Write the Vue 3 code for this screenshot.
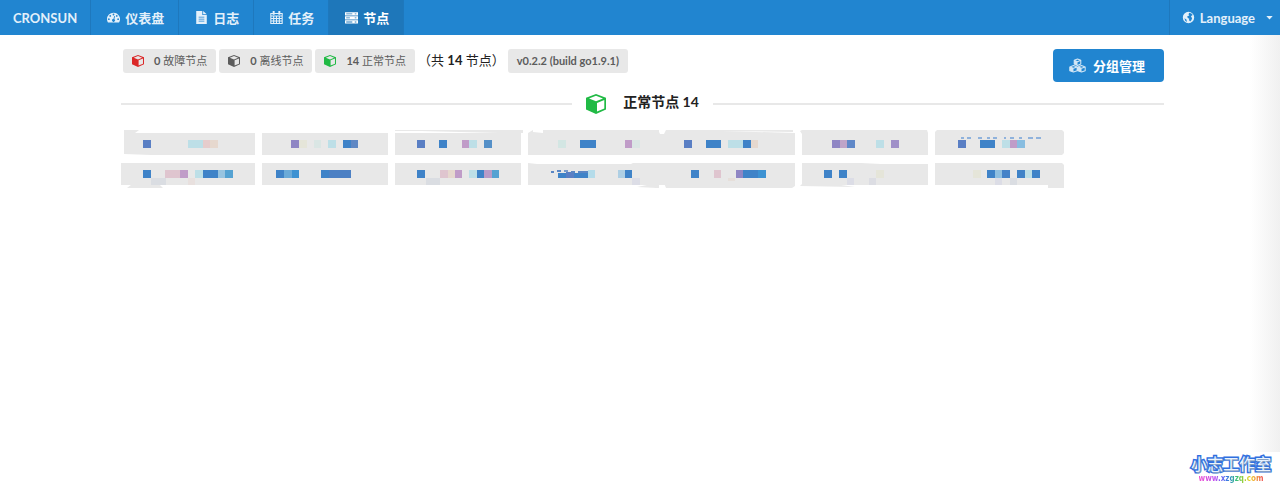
<script setup>
const menu = [
  { text: '仪表盘', icon: 'gauge' },
  { text: '日志', icon: 'file' },
  { text: '任务', icon: 'calendar' },
  { text: '节点', icon: 'server', active: true },
]

const labels = [
  { count: 0, text: '故障节点', tone: 'red' },
  { count: 0, text: '离线节点', tone: 'grey' },
  { count: 14, text: '正常节点', tone: 'green' },
]

const B = '#3f83c8', S = '#5a7fc4', V = '#8f86c4', C = '#bddfe7', P = '#c09cc8', R = '#dfc5cf', O = '#e6d8ce', Y = '#e5e5d9', G = '#dae6e4', F = '#dadde2'

// Each tile: outline path, then mosaic cells as [x, width, colour, y, height].
const nodes = [
  { d: 'M3 2H18L14 5H134V27H30L3 26Z', cells: [[22, 8, S], [67, 15, C], [82, 7, '#e6cccc'], [89, 8, O]] },
  { d: 'M141 5H267V27H141Z', cells: [[170, 8, V], [178, 8, Y], [193, 7, G], [207, 8, C], [222, 8, B], [230, 7, '#6088c4']] },
  { d: 'M274 2H402V5H400V27H274V5H378L300 3H274Z', cells: [[274, 126, '#e8e8e8', 5, 7], [296, 8, S], [318, 8, B], [341, 7, P], [348, 8, C], [363, 8, '#5590c8']] },
  { d: 'M407 5L412 2V4L422 5V2H537L539 6H544V27H407Z', cells: [[437, 8, '#d3e6e3'], [459, 16, B], [504, 7, P], [511, 8, G]] },
  { d: 'M534 2H538V6H543L545 2H672V4L600 3L674 5V27H534Z', cells: [[563, 8, S], [585, 15, B], [607, 15, C], [622, 8, B], [630, 7, O]] },
  { d: 'M681 2H806L807 5V27H681V6L679 3Z', cells: [[711, 8, V], [719, 7, '#bfa4c8'], [726, 8, '#6088c8'], [755, 8, C], [770, 8, '#a090c8']] },
  { d: 'M816 2H941L943 4V25L941 27H814V4Z', cells: [[837, 8, S], [859, 15, B], [881, 8, C], [889, 7, P], [896, 8, '#88bde0'],
    ...[[840, 3], [846, 4], [857, 4], [866, 3], [872, 4], [883, 2], [889, 4], [898, 3], [907, 5], [915, 5]].map(([x, w]) => [x, w, '#8fb2dc', 9, 2])] },
  { d: 'M0 5H134V27H39L42 30H6L10 27H0Z', cells: [[22, 8, B], [44, 15, R], [59, 8, P], [74, 8, C], [82, 15, B], [97, 7, '#98c4e0'], [104, 8, '#55a2d2'], [30, 15, F, 20, 7], [67, 7, '#e8e0de', 20, 7]] },
  { d: 'M141 5H267V27H141Z', cells: [[155, 8, B], [163, 8, '#6aaad8'], [171, 7, '#3d92d2'], [200, 8, B], [208, 22, '#4c80c4']] },
  { d: 'M274 5H400V27H274Z', cells: [[296, 8, B], [319, 8, R], [327, 7, O], [334, 7, P], [348, 8, C], [356, 7, B], [363, 8, '#b89bc8'], [371, 7, '#55a2d2'], [305, 14, F, 20, 7]] },
  { d: 'M407 5L416 6H510L512 5H544V27H538L536 30L516 29L526 27H407Z', cells: [[437, 30, B, 15, 5], [445, 8, S, 14, 6], [467, 7, '#b5dcea'], [497, 7, '#aecfe4'], [504, 7, B], [430, 3, '#5a86c4', 13, 2], [436, 4, '#5a86c4', 12, 2], [443, 4, '#7a9ccc', 12, 2], [450, 4, '#5a86c4', 13, 2], [457, 10, '#5a86c4', 13, 2], [511, 8, '#dcdde6', 20, 7]] },
  { d: 'M534 5H674V28L671 30H545L543 25H538V30H534Z', cells: [[570, 8, B], [593, 7, R], [615, 7, V], [622, 15, B], [637, 8, '#3d92d2'], [607, 7, '#e6dfda', 20, 3]] },
  { d: 'M681 5H740L760 6H807V27H720L734 29L679 28L681 26Z', cells: [[703, 8, B], [718, 8, B], [755, 8, Y], [726, 7, '#dcdde6', 20, 7], [748, 7, '#dcdde3', 20, 7]] },
  { d: 'M814 5H941L943 7V30H927V27H814Z', cells: [[852, 8, Y], [866, 8, B], [874, 7, '#8fbfe0'], [881, 8, '#4482c8'], [896, 8, B], [904, 7, C], [911, 8, B], [874, 7, '#dcdde6', 20, 7], [889, 7, F, 20, 7]] },
]
</script>

<template>
  <div class="page">
    <nav class="menu">
      <a class="item brand" href="#">CRONSUN</a>
      <a v-for="m in menu" :key="m.text" class="item" :class="{ active: m.active }" href="#">
        <svg class="icon" viewBox="0 0 16 16" aria-hidden="true">
          <template v-if="m.icon === 'gauge'">
            <path fill="currentColor" fill-rule="evenodd" d="M8 2a8 8 0 0 0-8 8c0 1.6.4 3 1.2 4.2h13.6A8 8 0 0 0 8 2ZM8 3.2a1.1 1.1 0 1 1 0 2.2 1.1 1.1 0 0 1 0-2.2ZM4 4.9a1.1 1.1 0 1 1 0 2.2 1.1 1.1 0 0 1 0-2.2Zm8 0a1.1 1.1 0 1 1 0 2.2 1.1 1.1 0 0 1 0-2.2ZM2.3 8.9a1.1 1.1 0 1 1 0 2.2 1.1 1.1 0 0 1 0-2.2Zm11.4 0a1.1 1.1 0 1 1 0 2.2 1.1 1.1 0 0 1 0-2.2ZM8.9 6.2l1 .3-.9 3.5a1.8 1.8 0 1 1-1.1-.3Z" />
          </template>
          <template v-else-if="m.icon === 'file'">
            <path fill="currentColor" fill-rule="evenodd" d="M1.500 0H9v5h5.500v11h-13ZM10 0l4.500 4H10ZM4.500 7v1h7V7Zm0 2.500v1h7v-1Zm0 2.500v1h7v-1Z" />
          </template>
          <template v-else-if="m.icon === 'calendar'">
            <path fill="none" stroke="currentColor" stroke-width="1.3" d="M1 3h14v12.400H1ZM1 6.200h14M1 9.200h14M1 12.200h14M4.500 6v9M8 6v9M11.500 6v9" />
            <path fill="none" stroke="currentColor" stroke-width="2.4" d="M4.500 0v4.500M11.500 0v4.500" />
          </template>
          <template v-else>
            <path fill="currentColor" fill-rule="evenodd" d="M0 1.500h16v4H0ZM1.500 3v1H9V3Zm10.500 0v1h2V3ZM0 6.500h16v4H0ZM1.500 8v1H6V8ZM12 8v1h2V8ZM0 11.500h16v4H0ZM1.500 13v1H9v-1Zm10.500 0v1h2v-1Z" />
          </template>
        </svg>
        <span>{{ m.text }}</span>
      </a>
      <button class="item language" type="button">
        <svg class="icon" viewBox="0 0 16 16" aria-hidden="true">
          <path fill="currentColor" fill-rule="evenodd" d="M8 1a7 7 0 1 1 0 14A7 7 0 0 1 8 1ZM9 2.300 11.500 3 13.300 5 12 5.500 11 7 12.500 8.500 11.500 11.500 10 13 8.500 11 9 9.500 7 8.500 6.500 6.500 9 5.500 8 4ZM3 9 5.500 10.500 6 13.500 4 12Z" />
        </svg>
        <span>Language</span>
        <svg class="caret" viewBox="0 0 8 5" aria-hidden="true"><path fill="currentColor" d="M0 0h8L4 4.500Z" /></svg>
      </button>
    </nav>

    <main class="content">
      <header class="summary">
        <div class="labels">
          <span v-for="l in labels" :key="l.text" class="label">
            <svg class="cube" :class="l.tone" viewBox="0 0 20 20" aria-hidden="true">
              <path fill="currentColor" fill-rule="evenodd" d="M10 0 20 3.800V15.500L10 20 0 15.500V3.800ZM10 1.800 3 4.500 10 7.300 17 4.500ZM18.300 6 11 8.900V17.600L18.300 14.400Z" />
            </svg>
            <span><b>{{ l.count }}</b> {{ l.text }}</span>
          </span>
          <span class="total">（共 <b>14</b> 节点）</span>
          <span class="label version">v0.2.2 (build go1.9.1)</span>
        </div>
        <button class="manage" type="button">
          <svg class="cubes" viewBox="0 0 18 16" aria-hidden="true">
            <g fill="none" stroke="currentColor" stroke-width="1.1" stroke-linejoin="round">
              <path d="M9 1 12.500 2.500V6.500L9 8 5.500 6.500V2.500ZM5.500 2.500 9 4 12.500 2.500M4.700 8 8.600 9.500V13.500L4.700 15 .8 13.500V9.500ZM.8 9.500 4.700 11 8.600 9.500M13.300 8 17.200 9.500V13.500L13.300 15 9.400 13.500V9.500ZM9.400 9.500 13.300 11 17.200 9.500" />
            </g>
            <path fill="currentColor" d="M9 4 5.500 2.500V6.500L9 8ZM4.700 11 .8 9.500V13.500L4.700 15ZM13.300 11 9.400 9.500V13.500L13.300 15Z" />
          </svg>
          <span>分组管理</span>
        </button>
      </header>

      <h4 class="divider">
        <svg class="cube green" viewBox="0 0 20 20" aria-hidden="true">
          <path fill="currentColor" fill-rule="evenodd" d="M10 0 20 3.800V15.500L10 20 0 15.500V3.800ZM10 1.800 3 4.500 10 7.300 17 4.500ZM18.300 6 11 8.900V17.600L18.300 14.400Z" />
        </svg>
        <span class="title">正常节点 14</span>
      </h4>

      <div class="nodes">
        <svg v-for="(n, i) in nodes" :key="i" class="node" :viewBox="`${(i % 7) * 134} 0 134 30`" aria-hidden="true">
          <path :d="n.d" fill="#e8e8e8" />
          <rect v-for="(c, k) in n.cells" :key="k" :x="c[0]" :width="c[1]" :fill="c[2]" :y="c[3] ?? 12" :height="c[4] ?? 8" />
        </svg>
      </div>
    </main>

    <div class="edge"></div>
    <div class="mark">
      <span class="studio">小志工作室</span>
      <span class="site">www.xzgzq.com</span>
    </div>
  </div>
</template>

<style>
body { margin: 0; background: #fff; }
</style>

<style scoped>
.page {
  position: relative;
  min-height: 100vh;
  overflow: hidden;
  font-family: Lato, "Noto Sans CJK SC", sans-serif;
  font-size: 13px;
  color: #222;
}
.menu { display: flex; height: 35px; background: #2185d0; }
.item {
  display: flex;
  align-items: center;
  gap: 5px;
  box-sizing: border-box;
  padding: 0 14px 0 16px;
  border: 0;
  border-right: 1px solid #1e78bd;
  background: none;
  color: #e3f0fa;
  font-family: inherit;
  font-size: 13px;
  font-weight: 700;
  line-height: 20px;
  text-decoration: none;
}
.brand { padding: 0 13px; }
.active { background: #1e77ba; color: #fff; }
.icon { width: 13px; height: 13px; flex: none; }
.language { margin-left: auto; padding: 0 7px 0 12px; border-right: 0; border-left: 1px solid #1e78bd; }
.caret { width: 7px; height: 4px; margin-left: 6px; }
.content { padding: 14px 116px 0 121px; }
.summary { display: flex; justify-content: space-between; align-items: flex-start; }
.labels { display: flex; align-items: center; gap: 3px; padding-left: 2px; }
.label {
  display: flex;
  align-items: center;
  gap: 10px;
  height: 24px;
  box-sizing: border-box;
  padding: 0 9px;
  border-radius: 3px;
  background: #e8e8e8;
  color: #5c5c5c;
  font-size: 11px;
  line-height: 16px;
  white-space: nowrap;
}
.cube { width: 12px; height: 12px; flex: none; }
.red { color: #db2828; }
.grey { color: #5c5c5c; }
.green { color: #21ba45; }
.total { align-self: flex-start; line-height: 22px; white-space: nowrap; }
.version { font-weight: 700; }
.manage {
  display: flex;
  align-items: center;
  gap: 7px;
  height: 33px;
  padding: 0 19px 0 16px;
  border: 0;
  border-radius: 4px;
  background: #2185d0;
  color: #fff;
  font-family: inherit;
  font-size: 13px;
  font-weight: 700;
}
.cubes { width: 17px; height: 15px; opacity: .8; }
.divider {
  display: flex;
  align-items: center;
  min-height: 24px;
  margin: 10px 0 0;
  font-size: 14px;
  font-weight: 700;
  line-height: 20px;
}
.divider::before, .divider::after { content: ""; flex: 1; height: 2px; background: #e8e8e8; }
.divider::before { margin-right: 14px; }
.divider::after { margin-left: 14px; }
.divider .cube { width: 20px; height: 20px; margin-right: 17px; }
.title { align-self: flex-start; }
.nodes { display: grid; grid-template-columns: repeat(7, 134px); margin-top: 12px; }
.node { display: block; width: 134px; height: 30px; overflow: visible; }
.edge {
  position: absolute;
  top: 35px;
  right: 0;
  bottom: 35px;
  width: 30px;
  background: linear-gradient(to right, #fff, #f0f0f0);
}
.mark {
  position: absolute;
  right: 9px;
  bottom: 3px;
  display: flex;
  flex-direction: column;
  align-items: center;
  white-space: nowrap;
}
.studio {
  color: #fff;
  font-size: 16px;
  font-weight: 400;
  line-height: 20px;
  color: #eaf4ff;
  -webkit-text-stroke: 3px #2f6fe0;
  paint-order: stroke fill;
  text-shadow: 1px 1px 1px #9ab;
}
.site {
  font-family: "DejaVu Sans Condensed", "DejaVu Sans", sans-serif;
  font-size: 8px;
  font-weight: 700;
  line-height: 10px;
  background: linear-gradient(to right, #f050d0, #c050f0 25%, #4070f0 42%, #30c080 58%, #a0d030 70%, #f0d020 80%, #f05050);
  background-clip: text;
  color: transparent;
}
</style>
